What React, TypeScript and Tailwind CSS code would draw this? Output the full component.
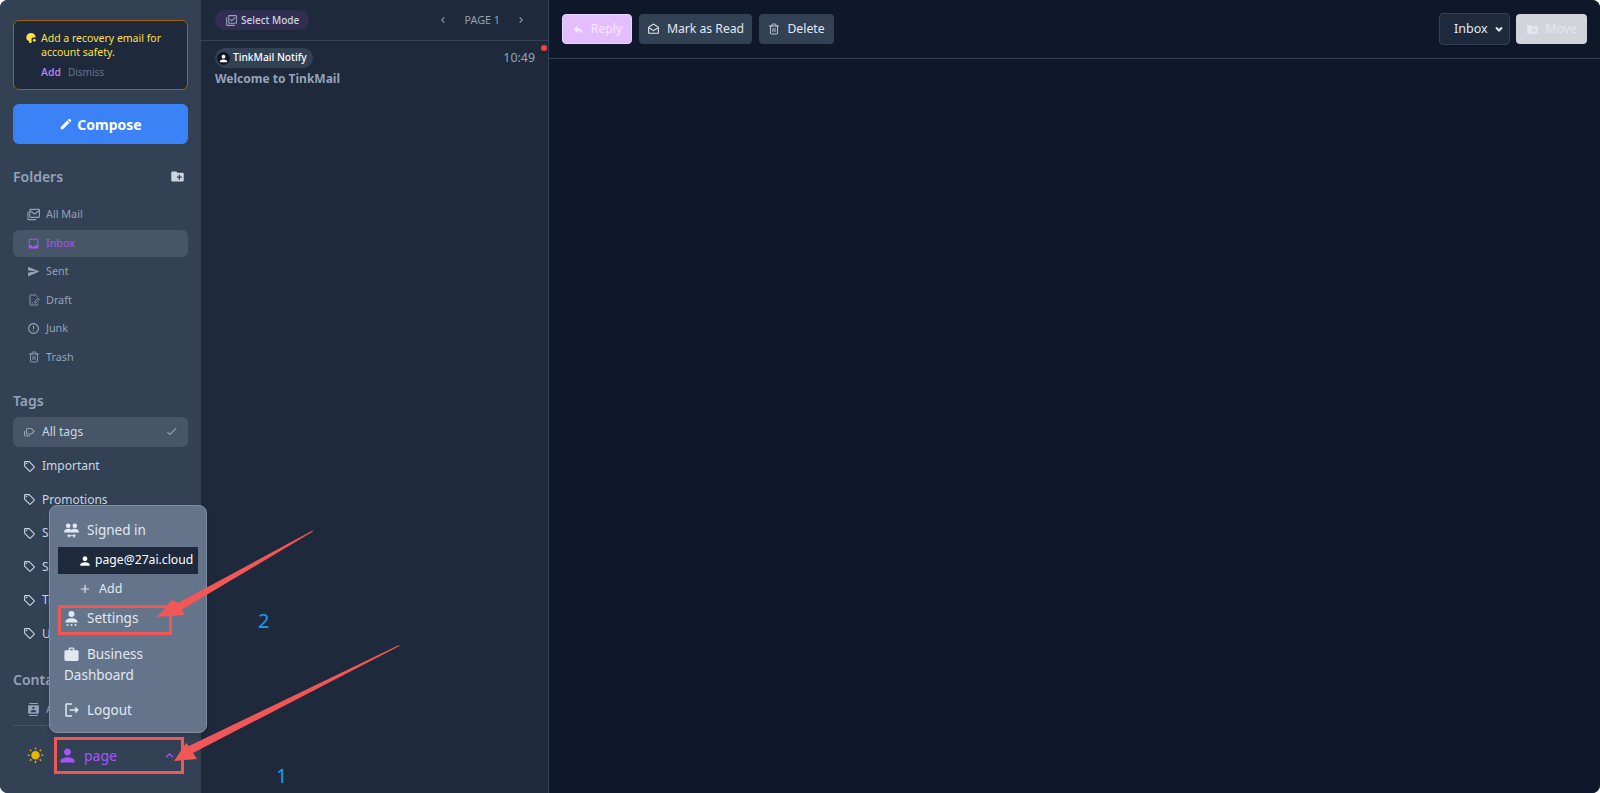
import {
  MdCheck,
  MdChevronLeft,
  MdChevronRight,
  MdContacts,
  MdCreateNewFolder,
  MdDriveFileMove,
  MdEdit,
  MdErrorOutline,
  MdExpandLess,
  MdInbox,
  MdOutlineDrafts,
  MdOutlineLibraryAddCheck,
  MdOutlineLogout,
  MdOutlineSell,
  MdPerson,
  MdReply,
  MdSend,
  MdAdd,
  MdWbSunny,
  MdWork,
} from 'react-icons/md';
import { FilePenLine, Trash2 } from 'lucide-react';

const font = { fontFamily: '"Noto Sans", sans-serif' };

function AllMailIcon({ size = 13 }: { size?: number }) {
  return (
    <svg width={size} height={size} viewBox="0 0 14 14" fill="none" stroke="currentColor" strokeWidth="1.2">
      <path d="M1 4v7.5c0 .6.4 1 1 1h8" />
      <rect x="3" y="1.5" width="10.4" height="8.6" rx="1" />
      <path d="M3.4 3l4.8 3.4L13 3" />
    </svg>
  );
}

function TagsIcon() {
  return (
    <svg width="12" height="12" viewBox="0 0 12 12" fill="none" stroke="currentColor" strokeWidth="1.1">
      <path d="M4.5 2.5h3.6c.3 0 .5.1.7.3l2.2 2.4-2.2 2.5c-.2.2-.4.3-.7.3H4.5c-.6 0-1-.4-1-1V3.500c0-.6.4-1 1-1z" />
      <path d="M1.500 5v3.500c0 1 .6 1.500 1.500 1.500h4" />
    </svg>
  );
}

function BlobBulbIcon() {
  return (
    <svg width="12" height="12" viewBox="0 0 12 12" className="mt-px shrink-0" fill="currentColor">
      <path d="M6 1c2.700 0 4.700 2 4.700 4.400H8.200c-.9 0-1.600.7-1.600 1.600v3.500C6.300 11 5.700 11 5 11c-.6 0-1-.5-1-1v-.7C2.300 8.500 1.300 7.200 1.300 5.500 1.300 3 3.300 1 6 1z" />
      <circle cx="9.300" cy="8.300" r="1.400" />
    </svg>
  );
}

function SignedInIcon() {
  return (
    <svg width="17" height="17" viewBox="0 0 17 17" fill="currentColor" className="shrink-0">
      <circle cx="5.200" cy="3.700" r="2.300" />
      <circle cx="11.800" cy="3.700" r="2.300" />
      <path d="M1 10c0-2 1.800-3.300 4.200-3.300 1.300 0 2.500.4 3.300 1.100.8-.7 2-1.100 3.300-1.100C14.200 6.700 16 8 16 10v.6H1V10z" />
      <path d="M5 13.800h7M6.500 12.300l-1.600 1.500 1.600 1.500M10.500 12.300l1.600 1.500-1.600 1.500" fill="none" stroke="currentColor" strokeWidth="1.100" />
    </svg>
  );
}

function SettingsPersonIcon() {
  return (
    <svg width="17" height="17" viewBox="0 0 17 17" fill="currentColor" className="shrink-0">
      <circle cx="8.500" cy="4" r="3" />
      <path d="M2.500 12c0-2.300 2.700-3.700 6-3.700s6 1.400 6 3.700v.6h-12V12z" />
      <circle cx="4.500" cy="15" r="1" />
      <circle cx="8.500" cy="15" r="1" />
      <circle cx="12.500" cy="15" r="1" />
    </svg>
  );
}

const folders = [
  { name: 'All Mail', icon: <AllMailIcon /> },
  { name: 'Inbox', icon: <MdInbox size={13} />, active: true },
  { name: 'Sent', icon: <MdSend size={13} /> },
  { name: 'Draft', icon: <FilePenLine size={12} strokeWidth={1.75} /> },
  { name: 'Junk', icon: <MdErrorOutline size={13} /> },
  { name: 'Trash', icon: <Trash2 size={12} strokeWidth={1.75} /> },
];

const tags = ['Important', 'Promotions', 'Social', 'Spam', 'Travel', 'Updates'];

function Sidebar() {
  return (
    <aside className="relative flex h-full w-[201px] shrink-0 flex-col bg-[#334155] px-[13px]">
      <div className="mt-5 h-[70px] shrink-0 rounded-md border border-[#a16207] bg-[#1e293b] pl-[11px] pr-2 pt-[10px]">
        <div className="flex gap-[4px] text-[10.5px] leading-[14px] text-[#fde047]">
          <BlobBulbIcon />
          <span>Add a recovery email for account safety.</span>
        </div>
        <div className="mt-[6px] flex gap-[7px] pl-[16px] text-[10.5px] leading-[14px]">
          <span className="font-medium text-[#c084fc]">Add</span>
          <span className="text-[10px] text-[#64748b]">Dismiss</span>
        </div>
      </div>

      <button className="mt-[14px] flex h-10 shrink-0 items-center justify-center gap-1 rounded-md bg-[#3b82f6] text-[14px] font-bold text-white">
        <MdEdit size={14} />
        Compose
      </button>

      <div className="mt-5 flex h-6 shrink-0 items-center justify-between pr-[3px] text-[14px] font-semibold text-[#94a3b8]">
        Folders
        <MdCreateNewFolder size={15} className="text-[#cbd5e1]" />
      </div>

      <nav className="mt-[13px] flex shrink-0 flex-col gap-[1.5px]">
        {folders.map((f) => (
          <div
            key={f.name}
            className={`flex h-[27px] items-center gap-[6px] rounded-md pl-[14px] text-[10.8px] ${
              f.active ? 'bg-[#475569] text-[#a855f7]' : 'text-[#94a3b8]'
            }`}
          >
            <span className="flex w-[13px] shrink-0 justify-center">{f.icon}</span>
            {f.name}
          </div>
        ))}
      </nav>

      <div className="mt-[18px] flex h-6 shrink-0 items-center text-[14px] font-semibold text-[#94a3b8]">Tags</div>

      <div className="mt-[4px] flex h-[30px] shrink-0 items-center gap-[7px] rounded-md bg-[#475569] pl-[10px] pr-[10px] text-[12px] text-[#cbd5e1]">
        <span className="text-[#94a3b8]">
          <TagsIcon />
        </span>
        All tags
        <MdCheck size={13} className="ml-auto text-[#94a3b8]" />
      </div>
      <div className="mt-[3px] flex shrink-0 flex-col">
        {tags.map((t) => (
          <div key={t} className="flex h-[33.5px] items-center gap-[6px] pl-[10px] text-[12px] text-[#cbd5e1]">
            <MdOutlineSell size={13} className="text-[#cbd5e1]" />
            {t}
          </div>
        ))}
      </div>

      <div className="mt-[17px] flex h-6 shrink-0 items-center text-[14px] font-semibold text-[#94a3b8]">Contacts</div>
      <div className="mt-[4px] flex h-[27px] shrink-0 items-center gap-[6px] pl-[14px] text-[10.8px] text-[#94a3b8]">
        <MdContacts size={13} />
        All Contacts
      </div>

      <div className="mt-[2px] border-t border-[#475569]" />
      <div className="mt-[12px] flex h-[36px] shrink-0 items-center">
        <MdWbSunny size={17} className="ml-[14px] text-[#eab308]" />
        <div className="ml-[10px] flex w-[129px] items-center pl-[3px] pr-[6px] text-[14px] text-[#a855f7]">
          <MdPerson size={21} />
          <span className="ml-[6px]">page</span>
          <MdExpandLess size={15} className="ml-auto" />
        </div>
      </div>

      <UserMenu />
    </aside>
  );
}

function UserMenu() {
  return (
    <div className="absolute left-[49px] top-[505px] flex h-[228px] w-[158px] flex-col rounded-lg border border-[#7f8ea3] bg-[#64748b] px-2 pt-[14px] text-[13.5px] text-[#e2e8f0] shadow-md">
      <div className="flex h-[20px] items-center gap-[7px] pl-[5px]">
        <SignedInIcon />
        Signed in
      </div>
      <div className="mt-[7px] flex h-[27px] items-center gap-[3px] bg-[#1e293b] pl-[20px] text-[12.2px] text-white">
        <MdPerson size={14} />
        page@27ai.cloud
      </div>
      <div className="mt-[4px] flex h-[22px] items-center gap-[7px] pl-[20px] text-[12.5px]">
        <MdAdd size={14} />
        Add
      </div>
      <div className="mt-[8px] flex h-[20px] items-center gap-[7px] pl-[5px]">
        <SettingsPersonIcon />
        Settings
      </div>
      <div className="mt-[16px] pl-[6px] leading-[21px]">
        <MdWork size={17} className="mr-[6px] inline -translate-x-px -translate-y-px" />
        Business
        <br />
        Dashboard
      </div>
      <div className="mt-[14px] flex h-[20px] items-center gap-[6px] pl-[5px]">
        <MdOutlineLogout size={18} />
        Logout
      </div>
    </div>
  );
}

function MailList() {
  return (
    <section className="flex h-full w-[348px] shrink-0 flex-col border-r border-[#334155] bg-[#1e293b]">
      <div className="flex h-[41px] shrink-0 items-center border-b border-[#334155] pl-[14px] pr-[21px]">
        <div className="flex h-5 items-center gap-[3px] rounded-full bg-[#312e52] px-[10px] text-[10px] font-medium text-[#cbd5e1]">
          <MdOutlineLibraryAddCheck size={13} className="text-[#94a3b8]" />
          Select Mode
        </div>
        <div className="ml-auto flex items-center gap-[15px] text-[10.8px] text-[#94a3b8]">
          <MdChevronLeft size={12} />
          <span>PAGE 1</span>
          <MdChevronRight size={12} />
        </div>
      </div>
      <div className="relative pl-[14px] pr-[13px] pt-[7px]">
        <div className="flex items-start justify-between">
          <div className="flex h-5 items-center gap-[3px] rounded-full bg-[#334155] pl-[2px] pr-[6px] text-[10.2px] font-medium text-white">
            <span className="flex h-[13px] w-[13px] items-center justify-center rounded-full bg-[#0f172a]">
              <MdPerson size={11} />
            </span>
            TinkMail Notify
          </div>
          <span className="mt-px text-[12.4px] text-[#94a3b8]">10:49</span>
        </div>
        <p className="mt-[2px] text-[12px] font-bold text-[#94a3b8]">Welcome to TinkMail</p>
        <span className="absolute right-[1px] top-[4px] h-[6px] w-[6px] rounded-full bg-[#ef4444]" />
      </div>
    </section>
  );
}

function Toolbar() {
  return (
    <div className="flex h-[59px] shrink-0 items-center border-b border-[#334155] pl-[13px] pr-[13px]">
      <button className="flex h-[30px] w-[70px] items-center justify-center gap-[6px] rounded border border-[#e9d5ff] bg-[#e3bdfc] text-[12.2px] text-[#f3e8ff]">
        <MdReply size={13} />
        Reply
      </button>
      <button className="ml-[7px] flex h-[30px] w-[113px] items-center justify-center gap-[7px] rounded bg-[#334155] text-[12.2px] text-[#e2e8f0]">
        <MdOutlineDrafts size={13} />
        Mark as Read
      </button>
      <button className="ml-[7px] flex h-[30px] w-[75px] items-center justify-center gap-[7px] rounded bg-[#334155] text-[12.2px] text-[#e2e8f0]">
        <Trash2 size={12} strokeWidth={1.75} className="text-[#cbd5e1]" />
        Delete
      </button>
      <div className="ml-auto flex h-[32px] w-[71px] items-center justify-between rounded border border-[#334155] bg-[#1e293b] pl-[14px] pr-[2px] text-[12.5px] text-[#e2e8f0]">
        Inbox
        <svg width="16" height="16" viewBox="0 0 16 16" fill="none" stroke="currentColor" strokeWidth="2">
          <path d="M5 6.500l3 3 3-3" />
        </svg>
      </div>
      <button className="ml-[6px] flex h-[30px] w-[71px] items-center justify-center gap-[6px] rounded bg-[#d1d5db] text-[12.2px] text-[#e5e7eb]">
        <MdDriveFileMove size={13} />
        Move
      </button>
    </div>
  );
}

// red annotations painted on top of the screenshot
function Annotations() {
  return (
    <>
      <svg className="pointer-events-none absolute inset-0" width="1600" height="793" fill="none">
        <rect x="59.500" y="606.500" width="111" height="27" stroke="#f25757" strokeWidth="3" />
        <rect x="55.500" y="738.500" width="127" height="34" stroke="#f25757" strokeWidth="3" />
        <polygon points="312.500,530.500 313,531.500 182,609.500 184,615 157,617 172,600 178,603" fill="#f25757" />
        <polygon points="399,645 399.500,646 193,753 197,759 174,761 186,743 189,746" fill="#f25757" />
      </svg>
      <span className="absolute left-[258px] top-[609px] text-[20px] leading-6 text-[#1d9bf0]">2</span>
      <span className="absolute left-[276px] top-[764px] text-[20px] leading-6 text-[#1d9bf0]">1</span>
    </>
  );
}

export default function App() {
  return (
    <div className="relative h-screen w-full overflow-hidden bg-white" style={font}>
      <div className="flex h-full w-full overflow-hidden rounded-lg bg-[#0f172a]">
        <Sidebar />
        <MailList />
        <main className="flex h-full min-w-0 flex-1 flex-col bg-[#0f172a]">
          <Toolbar />
        </main>
      </div>
      <Annotations />
    </div>
  );
}
